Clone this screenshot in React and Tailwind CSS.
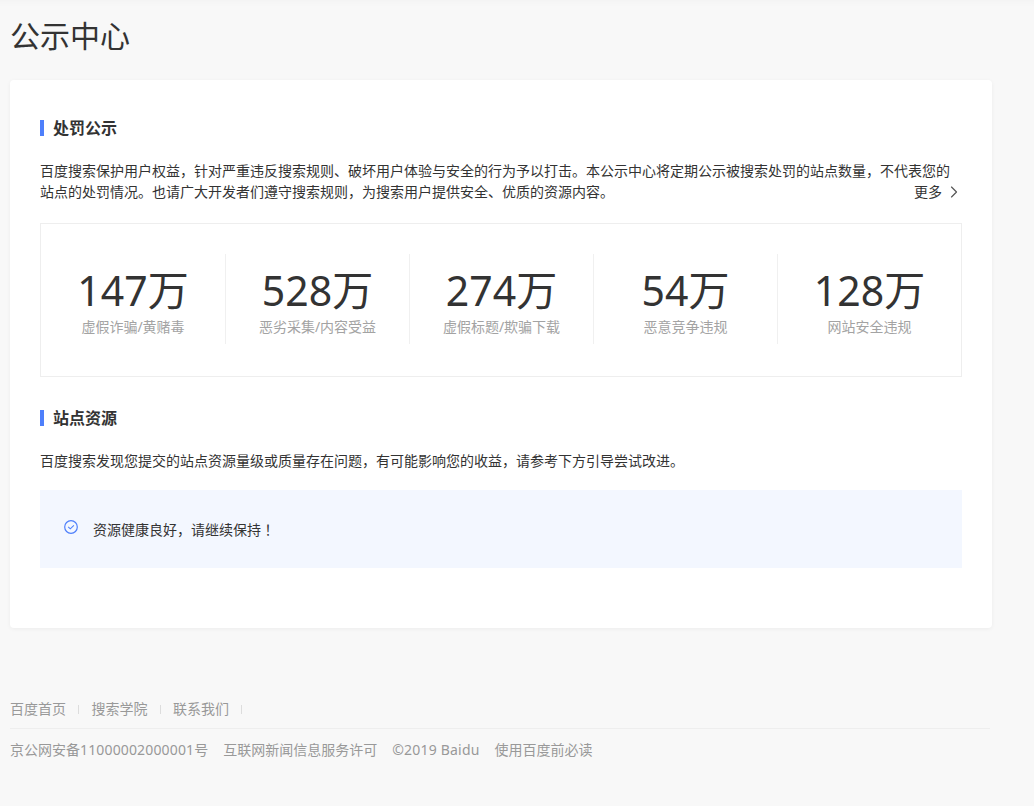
import { ChevronRight } from 'lucide-react'

const stats = [
  { value: '147万', label: '虚假诈骗/黄赌毒' },
  { value: '528万', label: '恶劣采集/内容受益' },
  { value: '274万', label: '虚假标题/欺骗下载' },
  { value: '54万', label: '恶意竞争违规' },
  { value: '128万', label: '网站安全违规' },
]

const font = "font-['Noto_Sans','Noto_Sans_CJK_SC',sans-serif]"

function SectionTitle({ children }) {
  return (
    <div className="flex items-center h-4">
      <span className="w-1 h-4 bg-[#4e7ffb]"></span>
      <h2 className="ml-[9px] text-base leading-4 font-bold text-[#333]">{children}</h2>
    </div>
  )
}

export default function App() {
  return (
    <div className={`${font} min-h-[806px] bg-[#f8f8f8] shadow-[inset_0_8px_8px_-8px_rgba(0,0,0,0.04)] px-2.5 overflow-hidden`}>
      <h1 className="pt-[16px] text-[30px] leading-10 text-[#333]">公示中心</h1>

      <div className="mt-[24px] w-[982px] h-[548px] bg-white rounded shadow-[0_1px_4px_rgba(0,0,0,0.05)] px-[30px] pt-[40px]">
        <SectionTitle>处罚公示</SectionTitle>
        <div className="relative mt-[24px] text-sm leading-[21px] text-[#333]">
          <p>百度搜索保护用户权益，针对严重违反搜索规则、破坏用户体验与安全的行为予以打击。本公示中心将定期公示被搜索处罚的站点数量，不代表您的<br />站点的处罚情况。也请广大开发者们遵守搜索规则，为搜索用户提供安全、优质的资源内容。</p>
          <a className="absolute right-[-2px] bottom-0 flex items-center gap-[2px]">
            更多
            <ChevronRight size={20} strokeWidth={1.4} className="text-[#555]" />
          </a>
        </div>

        <div className="mt-[21px] h-[154px] border border-[#eee] grid grid-cols-5 pt-[30px]">
          {stats.map((s, i) => (
            <div key={s.label} className={`h-[90px] flex flex-col items-center ${i > 0 ? 'border-l border-[#f0f0f0]' : ''}`}>
              <div className="mt-[8px] text-[41px] leading-[56px] text-[#333]">{s.value}</div>
              <div className="mt-[-1px] text-sm leading-5 text-[#a3a3a3]">{s.label}</div>
            </div>
          ))}
        </div>

        <div className="mt-[33px]">
          <SectionTitle>站点资源</SectionTitle>
        </div>
        <p className="mt-[24px] text-sm leading-[21px] text-[#333]">百度搜索发现您提交的站点资源量级或质量存在问题，有可能影响您的收益，请参考下方引导尝试改进。</p>

        <div className="mt-[19px] h-[78px] bg-[#f3f7ff] flex items-start pl-[24px] pt-[30px]">
          <svg width="14" height="14" viewBox="0 0 14 14" fill="none">
            <circle cx="7" cy="7" r="6.3" stroke="#4e7ffb" strokeWidth="1.2" />
            <path d="M4.2 6.8 L6.3 8.8 L9.9 5.4" stroke="#4e7ffb" strokeWidth="1.1" />
          </svg>
          <span className="ml-[15px] mt-[-1px] text-sm leading-5 text-[#333]">
            资源健康良好，请继续保持<span className="font-['Noto_Sans_CJK_TC',sans-serif]">！</span>
          </span>
        </div>
      </div>

      <footer className="mt-[71px] w-[980px] text-sm text-[#999]">
        <div className="flex items-center h-5">
          {['百度首页', '搜索学院', '联系我们'].map((t) => (
            <div key={t} className="flex items-center">
              <span>{t}</span>
              <span className="ml-3 mr-[12.5px] w-px h-[9px] bg-[#ddd]"></span>
            </div>
          ))}
        </div>
        <div className="mt-[9px] border-t border-[#eee] pt-[11px] flex gap-[15px] leading-5">
          <span>京公网安备<span className="tracking-[0.15px]">11000002000001</span>号</span>
          <span>互联网新闻信息服务许可</span>
          <span className="tracking-[0.2px]">©2019 Baidu</span>
          <span>使用百度前必读</span>
        </div>
      </footer>
    </div>
  )
}
